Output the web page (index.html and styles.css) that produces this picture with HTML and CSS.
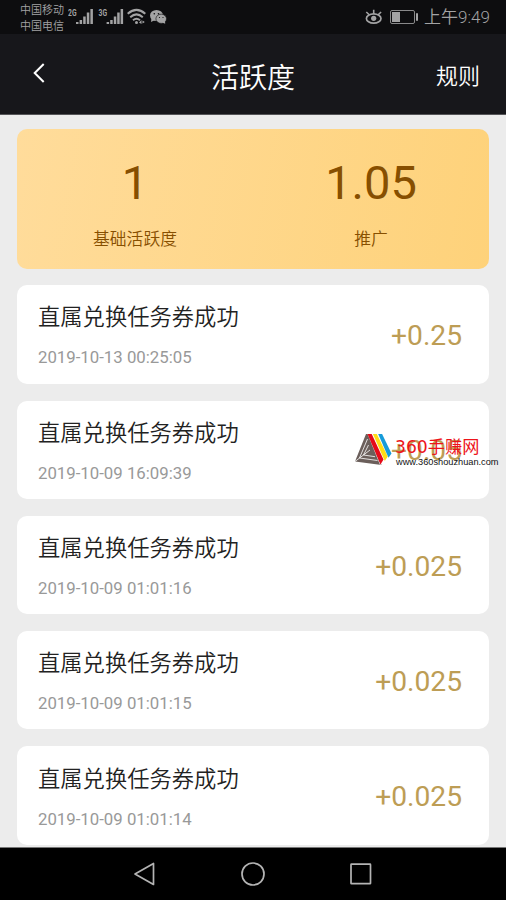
FILE: index.html
```html
<!DOCTYPE html>
<html lang="zh-CN">
<head>
<meta charset="utf-8">
<title>活跃度</title>
<link rel="stylesheet" href="styles.css">
</head>
<body>
<div class="status">
  <div class="carriers"><span>中国移动</span><span>中国电信</span></div>
  <svg class="signals" width="100" height="34" viewBox="0 0 100 34" fill="#a3a3a4">
    <g class="net"><text x="0" y="16" textLength="8.5" lengthAdjust="spacingAndGlyphs">2G</text><text x="30.5" y="16" textLength="8.5" lengthAdjust="spacingAndGlyphs">3G</text></g>
    <path d="M8 22h2.500v2H8zM11.600 20h2.500v4h-2.500zM15.200 16.500h2.500v7.500h-2.500zM18.800 12.500h2.500v11.500h-2.500zM22.400 9h2.500v15h-2.500z"/>
    <path d="M38.600 22h2.500v2h-2.500zM42.200 20h2.500v4h-2.500zM45.800 16.500h2.500v7.500h-2.500zM49.200 12.500h2.500v11.500h-2.500zM52.600 9h2.500v15h-2.500z"/>
    <g fill="none" stroke="#a3a3a4" stroke-width="2"><path d="M59.700 13.800q8.800-7.800 17.600 0M62.200 17.200q6.300-5.600 12.600 0M65 20.200q3.500-3 7 0"/></g>
    <circle cx="68.500" cy="22.500" r="1.500"/><path d="M71 22.500l2.500-2.500v4zM74.500 20.500l2.300 1.500-2.300 1.500z"/>
    <ellipse cx="88.500" cy="15.500" rx="6.500" ry="5.500"/><path d="M83.500 18l-.5 4 4-2z"/>
    <ellipse cx="93.200" cy="18.800" rx="5.300" ry="4.600" stroke="#0d0d0f" stroke-width=".6"/><path d="M94 22.500l3.200 1.300-.2-3z"/>
    <g fill="#0d0d0f"><circle cx="86.300" cy="13.700" r=".8"/><circle cx="90.500" cy="13.700" r=".8"/><circle cx="91.500" cy="17.500" r=".6"/><circle cx="95" cy="17.500" r=".6"/></g>
  </svg>
  <svg class="power" width="54" height="34" viewBox="0 0 54 34" fill="none" stroke="#a3a3a4">
    <ellipse cx="8.700" cy="18.500" rx="7.300" ry="4.700" stroke-width="1.700"/>
    <path stroke-width="1.600" d="M8.700 14V9.800M4.500 15L1.300 12M12.900 15l3.200-3"/>
    <circle cx="8.700" cy="18.300" r="2.600" fill="#a3a3a4" stroke="none"/>
    <rect x="25.500" y="10.500" width="24" height="13" rx="1.500" stroke="#89898a"/>
    <path fill="#a3a3a4" stroke="none" d="M27 12h8v10h-8zM51 13.300h2v7.500h-2z"/>
  </svg>
  <time class="clock">上午9:49</time>
</div>
<header class="bar">
  <svg class="back" width="14" height="22" viewBox="0 0 14 22" fill="none" stroke="#fff" stroke-width="2"><path d="M11.700 2L2.700 11l9 9"/></svg>
  <h1>活跃度</h1>
  <a class="rules">规则</a>
</header>
<main>
  <section class="summary">
    <div class="stat"><strong>1</strong><span>基础活跃度</span></div>
    <div class="stat"><strong>1.05</strong><span>推广</span></div>
  </section>
  <article class="card"><div><h2>直属兑换任务券成功</h2><time>2019-10-13 00:25:05</time></div><b>+0.25</b></article>
  <article class="card"><div><h2>直属兑换任务券成功</h2><time>2019-10-09 16:09:39</time></div><b>+0.05</b>
    <div class="mark">
      <svg width="37" height="34" viewBox="0 0 37 34">
        <path fill="#6b5f5b" d="M11 1h3L26.500 32 0 28.500z"/>
        <g fill="none" stroke="#fff" stroke-width=".8"><path d="M12.500 6L4.500 25l18 2.500M13.500 12L8.500 22l11.500 1.700M0 28.500L15 17M13 1l12.500 31"/></g>
        <path fill="#e50b19" d="M12.500 1h4.200L28.500 26.500l-3 5z"/>
        <path fill="#ffdc16" d="M17.900 1h3.900L32.800 23.500l-3 4.500z"/>
        <path fill="#169bd9" d="M23.200 1h3.900L36.500 20.500l-3 4.200z"/>
      </svg>
      <div class="marktext"><em>360手赚网</em>
        <svg class="site" width="106" height="14" viewBox="0 0 106 14"><text x="1" y="9" textLength="102.500" lengthAdjust="spacingAndGlyphs">www.360shouzhuan.com</text></svg>
      </div>
    </div>
  </article>
  <article class="card"><div><h2>直属兑换任务券成功</h2><time>2019-10-09 01:01:16</time></div><b>+0.025</b></article>
  <article class="card"><div><h2>直属兑换任务券成功</h2><time>2019-10-09 01:01:15</time></div><b>+0.025</b></article>
  <article class="card"><div><h2>直属兑换任务券成功</h2><time>2019-10-09 01:01:14</time></div><b>+0.025</b></article>
</main>
<nav class="keys">
  <svg width="24" height="26" viewBox="0 0 24 26"><path d="M20.500 2.500v21L2 13z"/></svg>
  <svg width="26" height="26" viewBox="0 0 26 26"><circle cx="13" cy="13" r="11"/></svg>
  <svg width="24" height="26" viewBox="0 0 24 26"><rect x="2" y="3.200" width="19.500" height="19.500" rx=".5"/></svg>
</nav>
</body>
</html>
```
FILE: styles.css
```css
* { box-sizing: border-box; }
body {
  margin: 0;
  width: 506px;
  height: 900px;
  overflow: hidden;
  display: flex;
  flex-direction: column;
  background: #ececec;
  font-family: Roboto, "Noto Sans CJK SC", sans-serif;
}
h1, h2 { margin: 0; }
svg { display: block; flex: none; }

.status {
  height: 34px;
  flex: none;
  display: flex;
  background: #0d0d0f;
  color: #a3a3a4;
}
.carriers {
  width: 48px;
  margin-left: 20px;
  padding-top: 3px;
  display: flex;
  flex-direction: column;
  font-size: 11px;
  line-height: 15.5px;
  font-weight: 350;
}
.net { font: 700 9px Roboto, sans-serif; }
.power { margin-left: auto; }
.clock {
  width: 66px;
  margin: 0 16px 0 5px;
  font-size: 17px;
  line-height: 35px;
  white-space: nowrap;
  font-weight: 350;
}

.bar {
  height: 81px;
  flex: none;
  display: grid;
  grid-template-columns: 1fr auto 1fr;
  align-items: center;
  padding: 0 26px 0 32px;
  background: #17171b;
  border-bottom: 1px solid #555558;
  color: #fff;
}
.back { margin-bottom: 2px; }
.bar h1 { font-size: 28px; line-height: 40px; font-weight: 350; margin: 9px 6px 0 0; }
.rules { justify-self: end; font-size: 22px; font-weight: 350; }

main {
  flex: 1;
  min-height: 0;
  overflow: hidden;
  padding: 14px 17px 0;
}
.summary {
  height: 140px;
  display: grid;
  grid-template-columns: 1fr 1fr;
  border-radius: 10px;
  background: linear-gradient(100deg, #ffdc9b, #fed27a);
  color: #874f00;
  margin-bottom: 16.300px;
}
.stat {
  display: flex;
  flex-direction: column;
  align-items: center;
  padding-top: 26px;
}
.stat strong { font-size: 47px; line-height: 56px; font-weight: 400; }
.stat span { font-size: 16.800px; line-height: 24px; margin-top: 16px; font-weight: 350; }

.card {
  position: relative;
  height: 98.300px;
  display: flex;
  align-items: center;
  justify-content: space-between;
  padding: 0 27px 0 21px;
  margin-bottom: 17px;
  border-radius: 10px;
  background: #fff;
}
.card h2 { font-size: 22.300px; line-height: 32px; padding-top: 1px; font-weight: 350; color: #222; }
.card time { display: block; font-size: 16.800px; line-height: 22px; margin-top: 13px; color: #999; }
.card b { font-size: 28.200px; font-weight: 400; color: #bd9d55; margin-top: 2.500px; }

.mark {
  position: absolute;
  left: 338px;
  top: 32px;
  display: flex;
}
.marktext { display: flex; flex-direction: column; margin-left: 3px; white-space: nowrap; }
.marktext em {
  font: 400 17.200px/23px "DejaVu Sans", "Noto Sans CJK SC", sans-serif;
  color: #ed141b;
  margin-top: 3px;
}
.site {
  font: 9.800px "Liberation Sans", sans-serif;
  fill: #111;
  margin-top: -3px;
}

.keys {
  height: 53px;
  flex: none;
  display: flex;
  justify-content: center;
  align-items: center;
  gap: 83px;
  background: #000;
  border-top: 1px solid #777;
}
.keys svg { fill: none; stroke: #b4b4b4; stroke-width: 1.700; stroke-linejoin: round; }
```
